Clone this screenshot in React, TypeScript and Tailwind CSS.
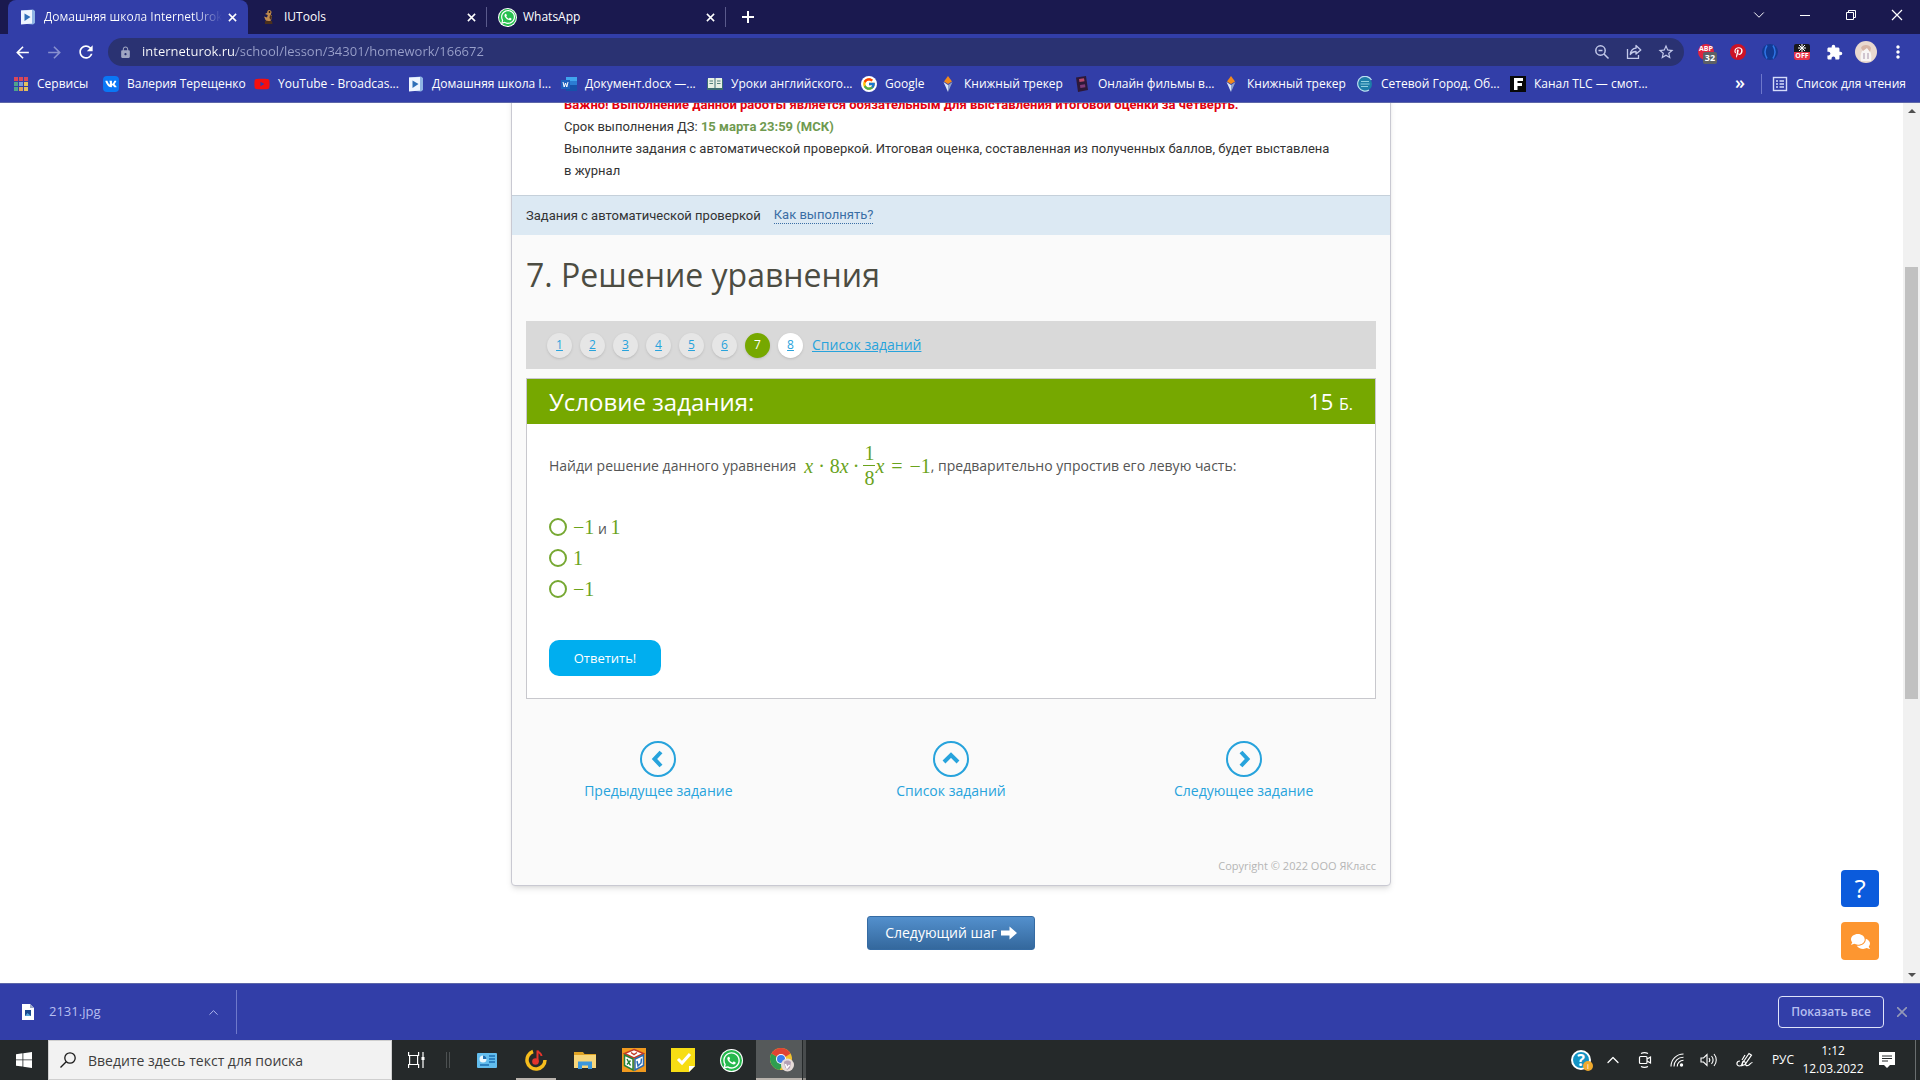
import { useState } from "react";
import type { ReactNode } from "react";
import { ChevronDown, ChevronUp } from "lucide-react";
import { FaComments, FaPinterestP, FaVk, FaWhatsapp, FaYoutube } from "react-icons/fa";
import { FcGoogle } from "react-icons/fc";
import { MdArrowBack, MdArrowForward, MdExtension, MdLock, MdMoreVert, MdRefresh, MdStarBorder } from "react-icons/md";

const ui = "font-['Open_Sans','Noto_Sans',sans-serif]";

/* ---------- small drawings ---------- */

const SchoolIcon = () => (
    <svg viewBox="0 0 16 16" className="h-4 w-4">
        <path d="M1 1.500 13 .5 15 2v12l-2 1.500-11-1Z" fill="#8fb4e4" />
        <path d="M1 1.500 12 1v13.500L1 15.500Z" fill="#eef5ff" />
        <path d="M4.500 4.500 10.500 8l-6 4Z" fill="#2f6fb8" />
    </svg>
);

const DuckIcon = () => (
    <svg viewBox="0 0 16 16" className="h-4 w-4">
        <path d="M9 1c1.500 0 2.500 1 2.500 2.200 0 1-.7 1.500-.7 2.800l1.200.5-1 5c-1.500 1-4 1-5.500-.5L4 7.500l3 1 .8-2.500L5 5l2.200-1.200C7.200 2 8 1 9 1Z" fill="#c08b4e" />
        <path d="M5 12h7l.5 3H5ZM10 6l2 1-1 4-1.500-2Z" fill="#4a2f1c" />
        <circle cx="9.500" cy="3" r=".9" fill="#2a180d" />
    </svg>
);

const WhatsAppIcon = () => (
    <span className="flex h-[17px] w-[17px] items-center justify-center rounded-full bg-[#27c04f] ring-1 ring-white">
        <FaWhatsapp className="h-4 w-4 text-white" />
    </span>
);

const AppsIcon = () => {
    const colors = ["#d9475a", "#d9475a", "#d9475a", "#4fa38c", "#7f9bd8", "#e3c15c", "#4fa38c", "#d9a15c", "#e3c15c"];

    return (
        <svg viewBox="0 0 16 16" className="h-4 w-4">
            {colors.map((color, i) => (
                <rect key={i} x={1 + (i % 3) * 5} y={1 + Math.floor(i / 3) * 5} width="4" height="4" fill={color} />
            ))}
        </svg>
    );
};

const VkIcon = () => (
    <span className="flex h-4 w-4 items-center justify-center rounded-[4px] bg-[#0a77f5] text-white">
        <FaVk className="h-3 w-3" />
    </span>
);

const WordIcon = () => (
    <svg viewBox="0 0 16 16" className="h-4 w-4">
        <path d="M5 1h11v4H5Z" fill="#41a5ee" />
        <path d="M5 5h11v4H5Z" fill="#2b7cd3" />
        <path d="M5 9h11v6H5Z" fill="#1651aa" />
        <rect y="4" width="9" height="9" fill="#1d5fbd" />
        <path d="m2 6 1.200 5L4.500 7l1.300 4L7 6" fill="none" stroke="#fff" strokeWidth="1" />
    </svg>
);

const BookIcon = () => (
    <svg viewBox="0 0 16 16" className="h-4 w-4">
        <path d="M0 3h16v11H0Z" fill="#3b6c72" />
        <path d="M1 2h6.500v10H1ZM8.500 2H15v10H8.500Z" fill="#e6f0e4" />
        <path d="M2.500 5H6M2.500 7.500H6M10 5h3.500M10 7.500h3.500" stroke="#4f7f7a" />
    </svg>
);

const TrackerIcon = () => (
    <svg viewBox="0 0 16 16" className="h-4 w-4">
        <path d="M8 0 12 5.500 8 8 4 5.500Z" fill="#f28a1c" />
        <path d="M3.500 6 8 9v7Z" fill="#dbe5f8" />
        <path d="M12.500 6 8 9v7Z" fill="#8fa2cc" />
    </svg>
);

const FilmIcon = () => (
    <svg viewBox="0 0 16 16" className="h-4 w-4">
        <path d="M2 1.500 12 0l2 14-10 2Z" fill="#2d1838" />
        <path d="m5 3 5-.7.500 3-5 .7Z" fill="#b8496c" />
        <path d="m6 9 5-.7.400 3-5 .7Z" fill="#7d3a78" />
    </svg>
);

const CityIcon = () => (
    <svg viewBox="0 0 16 16" className="h-4 w-4">
        <circle cx="8" cy="8" r="7" fill="#1d7ea8" />
        <path d="M14.500 4A7.400 7.400 0 1 0 12 14" fill="none" stroke="#b9e2f0" strokeWidth="1.200" />
        <path d="M4 5.500h8M3.500 8h9M4 10.500h7" stroke="#8fd0e0" />
    </svg>
);

const TlcIcon = () => (
    <svg viewBox="0 0 16 16" className="h-4 w-4">
        <rect width="16" height="16" fill="#080808" />
        <path d="M4 2h9v3H7.500v2H12v3H7.500v4H4Z" fill="#fff" />
    </svg>
);

const ReadingListIcon = () => (
    <svg viewBox="0 0 16 16" className="h-4 w-4" fill="none" stroke="#d5dcfa" strokeWidth="1.400">
        <rect x="1.500" y="1.500" width="13" height="13" />
        <path d="M4 5h2M7.500 5H12M4 8h2M7.500 8H12M4 11h2M7.500 11H12" />
    </svg>
);

const ZoomOutIcon = () => (
    <svg viewBox="0 0 16 16" className="h-4 w-4" fill="none" stroke="currentColor" strokeWidth="1.500">
        <circle cx="6.500" cy="6.500" r="4.700" />
        <path d="M4.500 6.500h4M10 10l4.500 4.500" />
    </svg>
);

const ShareIcon = () => (
    <svg viewBox="0 0 16 16" className="h-4 w-4" fill="none" stroke="currentColor" strokeWidth="1.300">
        <path d="M1.500 5v9.300h11V11" />
        <path d="M10 1.500 14.800 6 10 10V7.500C7 7.500 5.500 8.500 4.300 10.500 4.700 7 6.500 4.500 10 4.200Z" strokeLinejoin="round" />
    </svg>
);

const StepArrow = ({ d }: { d: string }) => (
    <svg viewBox="0 0 20 20" className="h-5 w-5" fill="none" stroke="currentColor" strokeWidth="4">
        <path d={d} />
    </svg>
);

const NextArrow = () => (
    <svg viewBox="0 0 16 14" className="h-[14px] w-4" fill="currentColor">
        <path d="M0 4.500h8.500V.5L16 7l-7.500 6.500v-4H0Z" />
    </svg>
);

const ChromeIcon = () => (
    <svg viewBox="0 0 24 24" className="h-6 w-6">
        <circle cx="11" cy="11" r="11" fill="#f2c230" />
        <path d="M11 11 1.500 5.500a11 11 0 0 0 8 16.400L14 15Z" fill="#2f9e4f" />
        <path d="M11 11 1.500 5.500A11 11 0 0 1 20.500 5.500L16 8.500Z" fill="#df4334" />
        <circle cx="11" cy="11" r="5" fill="#fff" />
        <circle cx="11" cy="11" r="4" fill="#3b7ded" />
        <circle cx="17.500" cy="17" r="6.500" fill="#e6dcd9" />
        <path d="M14 14c2-2 5-2 7 0l-1 6-3 2-2-3Z" fill="#b4a0b4" />
        <path d="m15.500 16 1.500 4 2.500-3" fill="none" stroke="#fff" strokeWidth="1.500" />
    </svg>
);

const CubeIcon = () => (
    <svg viewBox="0 0 24 24" className="h-6 w-6">
        <rect width="24" height="24" fill="#f19a1f" />
        <path d="m12 1.500 9.500 4L12 10 2.500 5.500Z" fill="#fff" stroke="#c23a27" strokeWidth="1.500" />
        <path d="M2.500 7 11 11v11l-8.500-4.500Z" fill="#fff" stroke="#24813b" strokeWidth="1.500" />
        <path d="M21.500 7 13 11v11l8.500-4.500Z" fill="#fff" stroke="#286bb5" strokeWidth="1.500" />
        <path d="m5 11 3.500 6.500M8.500 12.500 5 16.500" stroke="#24813b" strokeWidth="1.500" />
        <path d="m15 13 1 5 3-3 .500-4.500" fill="none" stroke="#286bb5" strokeWidth="1.500" />
        <path d="m9 4.500 3 2 3-2" fill="none" stroke="#c23a27" strokeWidth="1.500" />
    </svg>
);

/* ---------- browser ---------- */

const Tab = ({ icon, title, active, separated }: { icon: ReactNode; title: string; active?: boolean; separated?: boolean }) => (
    <div className={active ? "flex w-60 items-center rounded-t-lg bg-[#323ea8] pr-2 pl-3" : "flex w-[239px] items-center pr-2 pl-3"}>
        <span className="flex w-5 shrink-0 items-center justify-start">{icon}</span>
        <span className={active ? "ml-1 min-w-0 flex-1 overflow-hidden bg-[linear-gradient(to_right,#fff_150px,#323ea8_178px)] bg-clip-text text-xs whitespace-nowrap text-transparent" : "ml-1 flex-1 text-xs"}>{title}</span>
        <button aria-label="Закрыть вкладку" className="flex h-4 w-4 shrink-0 items-center justify-center">
            <svg viewBox="0 0 10 10" className="h-[9px] w-[9px]" stroke="#fff" strokeWidth="1.700"><path d="m1 1 8 8M9 1 1 9" /></svg>
        </button>
        {separated && <span className="-mr-2 ml-[7px] h-5 w-px bg-[#5a5a8c]" />}
    </div>
);

const TabStrip = () => (
    <header className="flex h-[34px] shrink-0 items-stretch bg-[#1a194f] pl-2 text-white">
        <Tab active icon={<SchoolIcon />} title="Домашняя школа InternetUrok.ru" />
        <Tab separated icon={<DuckIcon />} title="IUTools" />
        <Tab separated icon={<WhatsAppIcon />} title="WhatsApp" />
        <button aria-label="Новая вкладка" className="flex w-11 items-center justify-center">
            <svg viewBox="0 0 12 12" className="h-3 w-3" stroke="#fff" strokeWidth="2"><path d="M6 0v12M0 6h12" /></svg>
        </button>
        <div className="ml-auto flex pb-1">
            <button aria-label="Поиск вкладок" className="flex w-[46px] items-center justify-center"><ChevronDown size={18} strokeWidth={1.3} /></button>
            <button aria-label="Свернуть" className="flex w-[46px] items-center justify-center"><span className="h-px w-[10px] bg-white" /></button>
            <button aria-label="Развернуть" className="flex w-[46px] items-center justify-center">
                <svg viewBox="0 0 12 12" className="h-3 w-3" fill="none" stroke="#fff"><path d="M1.500 3.500h7v7h-7ZM3.500 3.500v-2h7v7h-2" /></svg>
            </button>
            <button aria-label="Закрыть" className="flex w-[46px] items-center justify-center">
                <svg viewBox="0 0 12 12" className="h-3 w-3" stroke="#fff" strokeWidth="1.200"><path d="m1 1 10 10M11 1 1 11" /></svg>
            </button>
        </div>
    </header>
);

const Extension = ({ label, children }: { label: string; children: ReactNode }) => (
    <button aria-label={label} className="flex h-8 w-8 items-center justify-center">{children}</button>
);

const AddressBar = () => (
    <div className="flex h-9 shrink-0 items-center bg-[#323ea8] pr-[6px] pl-[6px] text-white">
        <Extension label="Назад"><MdArrowBack size={19} /></Extension>
        <Extension label="Вперёд"><MdArrowForward size={19} className="text-[#8890cf]" /></Extension>
        <Extension label="Обновить"><MdRefresh size={20} /></Extension>
        <div className="ml-[6px] flex h-7 flex-1 items-center rounded-full bg-[#2a3272] pr-[2px] pl-[11px] text-[#c3c9ea]">
            <MdLock size={13} className="text-[#9fa5c2]" />
            <input
                aria-label="Адресная строка"
                defaultValue="interneturok.ru/school/lesson/34301/homework/166672"
                className="ml-[10px] min-w-0 flex-1 bg-[linear-gradient(to_right,#fff_94px,#9aa1cb_94px)] bg-clip-text text-[13px] text-transparent outline-none"
            />
            <Extension label="Масштаб"><ZoomOutIcon /></Extension>
            <Extension label="Поделиться"><ShareIcon /></Extension>
            <Extension label="В закладки"><MdStarBorder size={18} /></Extension>
        </div>
        <div className="ml-[6px] flex">
            <Extension label="AdBlock Plus">
                <span className="flex h-4 w-4 flex-col items-center rounded-full bg-[#e0243f] pt-px text-[7px] leading-[7px] font-bold">
                    ABP
                    <span className="ml-2 rounded-[2px] bg-[#5d6065] px-[2px] text-[9px] leading-3">32</span>
                </span>
            </Extension>
            <Extension label="Pinterest">
                <span className="flex h-4 w-4 items-center justify-center rounded-full bg-[#cc1225]"><FaPinterestP size={11} /></span>
            </Extension>
            <Extension label="VPN">
                <svg viewBox="0 0 16 16" className="h-4 w-4" fill="none" stroke="#2f74e4" strokeWidth="1.500"><circle cx="8" cy="8" r="8" fill="#123a94" stroke="none" /><path d="M5 1.500c-2.500 4-2.500 9 0 13M11 1.500c2.500 4 2.500 9 0 13" /></svg>
            </Extension>
            <Extension label="Выключатель">
                <span className="flex h-4 w-4 flex-col items-center justify-between overflow-hidden rounded-[2px] bg-[#18181c]">
                    <svg viewBox="0 0 12 8" className="h-2 w-3" stroke="#fff"><path d="M6 0v8M2 4h8M3 1l6 6M9 1 3 7" /></svg>
                    <span className="w-4 bg-[#e5344b] text-center text-[7px] leading-[8px] font-bold">OFF</span>
                </span>
            </Extension>
            <Extension label="Расширения"><MdExtension size={17} /></Extension>
            <Extension label="Профиль">
                <svg viewBox="0 0 22 22" className="h-[22px] w-[22px]"><circle cx="11" cy="11" r="11" fill="#e9d9cf" /><path d="M6 20c-1-5 0-9 2-11l3-4 3 4c2 2 3 6 2 11Z" fill="#f8f5f4" /><path d="M6 7c1-4 9-4 10 0l-1 4-3-4-4 3Z" fill="#d6b5a6" /><path d="M9 12v6M13 12v6" stroke="#a996ac" /></svg>
            </Extension>
            <Extension label="Меню"><MdMoreVert size={20} /></Extension>
        </div>
    </div>
);

const bookmarks = [
    { title: "Сервисы", width: "w-[90px]", icon: <AppsIcon /> },
    { title: "Валерия Терещенко", width: "w-[151px]", icon: <VkIcon /> },
    { title: "YouTube - Broadcas...", width: "w-[154px]", icon: <FaYoutube size={16} className="text-[#f40f0f]" /> },
    { title: "Домашняя школа I...", width: "w-[153px]", icon: <SchoolIcon /> },
    { title: "Документ.docx —...", width: "w-[146px]", icon: <WordIcon /> },
    { title: "Уроки английского...", width: "w-[154px]", icon: <BookIcon /> },
    { title: "Google", width: "w-[79px]", icon: <span className="rounded-full bg-white p-px"><FcGoogle size={14} /></span> },
    { title: "Книжный трекер", width: "w-[134px]", icon: <TrackerIcon /> },
    { title: "Онлайн фильмы в...", width: "w-[149px]", icon: <FilmIcon /> },
    { title: "Книжный трекер", width: "w-[134px]", icon: <TrackerIcon /> },
    { title: "Сетевой Город. Об...", width: "w-[153px]", icon: <CityIcon /> },
    { title: "Канал TLC — смот...", width: "w-[153px]", icon: <TlcIcon /> },
];

const BookmarksBar = () => (
    <nav aria-label="Закладки" className="flex h-[33px] shrink-0 items-center border-b border-[#5c66a8] bg-[#323ea8] pr-[14px] pb-1 pl-[13px] text-xs text-white">
        {bookmarks.map((bookmark, i) => (
            <a key={i} href="#" className={`flex shrink-0 items-center gap-2 whitespace-nowrap ${bookmark.width}`}>
                <span className="flex w-4 shrink-0 justify-center">{bookmark.icon}</span>
                {bookmark.title}
            </a>
        ))}
        <button aria-label="Другие закладки" className="ml-auto pb-1 text-lg leading-5 font-semibold">»</button>
        <span className="ml-4 h-5 w-px bg-[#6d77cb]" />
        <a href="#" className="ml-[10px] flex items-center gap-2 whitespace-nowrap"><ReadingListIcon />Список для чтения</a>
    </nav>
);

/* ---------- lesson page ---------- */

const Num = ({ children }: { children: ReactNode }) => (
    <span className="font-['Liberation_Serif',serif] text-xl leading-6 text-[#6aa31c]">{children}</span>
);

const Formula = () => (
    <span className="ml-2 inline-flex items-center font-['Liberation_Serif',serif] text-xl leading-6 text-[#6aa31c]">
        <i>x</i>
        <span className="mx-[5px]">·</span>
        8<i>x</i>
        <span className="mx-1">·</span>
        <span className="flex flex-col items-center">
            <span className="border-b border-[#6aa31c] px-px">1</span>
            <span>8</span>
        </span>
        <i>x</i>
        <span className="mx-[7px]">=</span>
        −1
    </span>
);

const Answers = () => {
    const [selected, setSelected] = useState<number | null>(null);
    const answers = [<><Num>−1</Num> и <Num>1</Num></>, <Num>1</Num>, <Num>−1</Num>];

    return (
        <div role="radiogroup" aria-label="Варианты ответа" className="mt-[21px] flex flex-col">
            {answers.map((answer, i) => (
                <label key={i} className="flex h-[31px] items-center gap-[6px]">
                    <input
                        type="radio"
                        name="answer"
                        checked={selected === i}
                        onChange={() => setSelected(i)}
                        className="h-[18px] w-[18px] appearance-none rounded-full border-2 border-[#76a832] bg-white checked:bg-[#76a832]"
                    />
                    <span>{answer}</span>
                </label>
            ))}
        </div>
    );
};

const StepLink = ({ icon, title }: { icon: ReactNode; title: string }) => (
    <a href="#" className="flex flex-col items-center gap-1 text-sm text-[#27a3dc]">
        <span className="flex h-9 w-9 items-center justify-center rounded-full border-2 border-[#27a3dc]">{icon}</span>
        {title}
    </a>
);

const TaskPager = () => (
    <nav aria-label="Задания" className="mt-6 flex h-12 items-center gap-2 bg-[#d9d9d9] pl-[21px] text-xs">
        {[1, 2, 3, 4, 5, 6].map((n) => (
            <a key={n} href="#" className="flex h-[25px] w-[25px] items-center justify-center rounded-full bg-[#e6e6e6] text-[#27a3dc] underline shadow-sm">{n}</a>
        ))}
        <span className="flex h-[25px] w-[25px] items-center justify-center rounded-full bg-[#76a800] text-white shadow-sm">7</span>
        <a href="#" className="flex h-[25px] w-[25px] items-center justify-center rounded-full bg-white text-[#27a3dc] underline shadow-sm">8</a>
        <a href="#" className="ml-px text-sm text-[#27a3dc] underline">Список заданий</a>
    </nav>
);

const LessonCard = () => (
    <article className="-mt-[10px] w-[880px] rounded-b-[4px] border border-[#c9c9d2] bg-[#fafafa] shadow-md">
        <div className="bg-white pr-14 pb-[13px] pl-[52px] font-['Roboto',sans-serif] text-[13px] leading-[22px] text-[#333]">
            <p className="font-bold text-[#e0000f]">Важно! Выполнение данной работы является обязательным для выставления итоговой оценки за четверть.</p>
            <p>Срок выполнения ДЗ: <b className="text-[#6f9a50]">15 марта 23:59 (МСК)</b></p>
            <p>Выполните задания с автоматической проверкой. Итоговая оценка, составленная из полученных баллов, будет выставлена в&nbsp;журнал</p>
        </div>
        <div className="flex h-10 items-center gap-[13px] border-t border-[#c5d0da] bg-[#dce9f3] px-[14px] font-['Roboto',sans-serif] text-[13px] text-[#333]">
            Задания с автоматической проверкой
            <a href="#" className="border-b border-dotted border-[#3a6ea5] leading-4 text-[#3a6ea5]">Как выполнять?</a>
        </div>
        <div className="px-[14px] pt-[18px] pb-[11px]">
            <h1 className="text-[32px] leading-[44px] text-[#4c4c42]">7. Решение уравнения</h1>
            <TaskPager />
            <section className="mt-[9px] border border-[#c8c8cd] bg-white">
                <header className="flex h-[45px] items-center justify-between bg-[#76a800] px-[22px] text-white">
                    <h2 className="text-2xl">Условие задания:</h2>
                    <span className="text-[22px]">15 <span className="text-base">Б.</span></span>
                </header>
                <form className="px-[22px] pt-[17px] pb-[22px] text-sm text-[#555]" onSubmit={(e) => e.preventDefault()}>
                    <p className="flex items-center whitespace-nowrap">Найди решение данного уравнения<Formula />, предварительно упростив его левую часть:</p>
                    <Answers />
                    <button className="mt-9 h-9 w-28 rounded-[10px] bg-[#00aeef] text-[13px] text-white">Ответить!</button>
                </form>
            </section>
            <nav aria-label="Навигация по заданиям" className="-mx-[14px] mt-[42px] grid grid-cols-3">
                <StepLink icon={<StepArrow d="M13 3 6.500 10l6.500 7" />} title="Предыдущее задание" />
                <StepLink icon={<StepArrow d="m3 13 7-7 7 7" />} title="Список заданий" />
                <StepLink icon={<StepArrow d="m7 3 6.500 7L7 17" />} title="Следующее задание" />
            </nav>
            <p className="mt-[57px] text-right text-[11px] leading-4 text-[#b5b5b5]">Copyright © 2022 ООО ЯКласс</p>
        </div>
    </article>
);

const Scrollbar = () => (
    <div aria-hidden="true" className="flex w-[17px] shrink-0 flex-col items-center bg-[#f1f1f1] py-[6px]">
        <span className="border-x-4 border-b-4 border-x-transparent border-b-[#505050]" />
        <span className="mt-[154px] h-[432px] w-[13px] bg-[#c1c1c1]" />
        <span className="mt-auto border-x-4 border-t-4 border-x-transparent border-t-[#505050]" />
    </div>
);

const LessonPage = () => (
    <div className="flex min-h-0 flex-1 overflow-hidden bg-white">
        <main className="relative flex min-w-0 flex-1 flex-col items-center overflow-hidden pr-px">
            <LessonCard />
            <button className="mt-[30px] flex h-[34px] shrink-0 items-center gap-1 rounded-[3px] border border-[#356ba3] bg-linear-to-b from-[#5390cd] to-[#34689d] px-[17px] text-sm text-white">
                Следующий шаг <NextArrow />
            </button>
            <div className="absolute right-6 bottom-[23px] flex flex-col gap-[15px]">
                <button aria-label="Помощь" className="flex h-[37px] w-[38px] items-center justify-center rounded-[4px] bg-[#0b5bdc] text-[26px] text-white">?</button>
                <button aria-label="Чат" className="flex h-[38px] w-[38px] items-center justify-center rounded-[4px] bg-[#fd9630] text-white"><FaComments size={19} /></button>
            </div>
        </main>
        <Scrollbar />
    </div>
);

const DownloadBar = () => (
    <footer className="flex h-[57px] shrink-0 items-center border-t border-[#5c66a8] bg-[#323ea8] pr-[13px] pl-[22px] text-[#b7bff0]">
        <svg viewBox="0 0 12 16" className="h-4 w-3"><path d="M0 0h8l4 4v12H0Z" fill="#fff" /><path d="M8 0v4h4Z" fill="#9aa8c8" /><path d="M3 6h6v6H3Z" fill="#1c4b8e" /><path d="m3 12 2.500-3L9 12Z" fill="#57a6d8" /></svg>
        <span className="ml-[15px] w-[156px] text-[13px]">2131.jpg</span>
        <button aria-label="Открыть меню" className="flex w-4 justify-center"><ChevronUp size={15} strokeWidth={1.5} /></button>
        <span className="ml-[15px] h-11 w-px bg-[#6f79cb]" />
        <button className="ml-auto h-8 w-[106px] rounded-[4px] border border-[#dfe3fa] text-xs font-semibold">Показать все</button>
        <button aria-label="Закрыть панель" className="ml-[13px]">
            <svg viewBox="0 0 10 10" className="h-[10px] w-[10px]" stroke="#9499b8" strokeWidth="1.600"><path d="m0 0 10 10M10 0 0 10" /></svg>
        </button>
    </footer>
);

/* ---------- desktop ---------- */

const TaskbarApp = ({ label, children, open }: { label: string; children: ReactNode; open?: boolean }) => (
    <button aria-label={label} className="relative flex w-[49px] items-center justify-center">
        {children}
        {open && <span className="absolute bottom-0 h-[2px] w-10 bg-[#b9b3ad]" />}
    </button>
);

const Taskbar = () => (
    <footer className="flex h-10 shrink-0 items-stretch bg-[#25292a] text-white">
        <button aria-label="Пуск" className="flex w-12 items-center justify-center">
            <svg viewBox="0 0 16 16" className="h-4 w-4" fill="#fff"><path d="M0 2.200 6.500 1.300v6.200H0ZM7.300 1.200 16 0v7.500H7.300ZM0 8.300h6.500v6.300L0 13.700ZM7.300 8.300H16V16l-8.700-1.300Z" /></svg>
        </button>
        <label className="flex w-[344px] items-center gap-3 border border-[#cfcfcf] bg-[#f2f2f2] pl-[11px]">
            <svg viewBox="0 0 16 16" className="h-4 w-4" fill="none" stroke="#1b1b1b" strokeWidth="1.300"><circle cx="10" cy="6" r="5.200" /><path d="M6.200 9.800.500 15.500" /></svg>
            <input type="text" aria-label="Поиск" placeholder="Введите здесь текст для поиска" className="min-w-0 flex-1 bg-transparent text-[14px] text-[#333] outline-none placeholder:text-[#3d3d3d]" />
        </label>
        <button aria-label="Представление задач" className="flex w-12 items-center justify-center">
            <svg viewBox="0 0 17 16" className="h-4 w-[17px]" fill="none" stroke="#fff" strokeWidth="1.200"><path d="M.6 0v3.500h10V0M.6 16v-3.500h10V16M1.600 3.500v9M9.600 3.500v9M15 0v16" /><path d="M13.500 5h3v3h-3Z" fill="#fff" stroke="none" /></svg>
        </button>
        <span className="my-3 mr-3 ml-[6px] w-1 border-x border-[#4d5152]" />
        <TaskbarApp label="Панель управления">
            <svg viewBox="0 0 20 15" className="h-[15px] w-5"><rect width="20" height="15" rx="1" fill="#62bdee" /><circle cx="6" cy="6" r="3.500" fill="#eaf7fd" /><path d="M6 6V2.500A3.500 3.500 0 0 1 9.500 6Z" fill="#1d6fb3" /><path d="M12 3h6M12 6h6M12 9h6M3 12h9" stroke="#1d6fb3" strokeWidth="1.300" /></svg>
        </TaskbarApp>
        <TaskbarApp label="Музыка" open>
            <svg viewBox="0 0 22 22" className="h-[22px] w-[22px]" fill="none"><path d="M8 2.500A9 9 0 1 0 20 11" stroke="#f6bd1d" strokeWidth="3.500" /><path d="M12.500 13V1.500c1 2.500 4 2.500 4 5.500" stroke="#e4342c" strokeWidth="2" /><circle cx="10.500" cy="12.500" r="3.300" fill="#e4342c" /></svg>
        </TaskbarApp>
        <TaskbarApp label="Проводник">
            <svg viewBox="0 0 22 18" className="h-[18px] w-[22px]"><path d="M0 1h9l1.500 2H22v14H0Z" fill="#dfa325" /><path d="M0 4h22v13H0Z" fill="#f7d67b" /><path d="M4 18v-7.500h14V18h-4v-3.500H8V18Z" fill="#3b97dd" /></svg>
        </TaskbarApp>
        <TaskbarApp label="Кубики"><CubeIcon /></TaskbarApp>
        <TaskbarApp label="Заметки">
            <svg viewBox="0 0 24 24" className="h-6 w-6"><path d="M0 0h24v18l-6 6H0Z" fill="#f7dd14" /><path d="M24 18h-6v6Z" fill="#fff" /><path d="m7 11 4 4 8-9" fill="none" stroke="#fff" strokeWidth="3" /></svg>
        </TaskbarApp>
        <TaskbarApp label="WhatsApp">
            <span className="flex h-[21px] w-[21px] items-center justify-center rounded-full bg-[#25b84c] ring-1 ring-white"><FaWhatsapp size={19} /></span>
        </TaskbarApp>
        <button aria-label="Google Chrome" className="flex w-[46px] items-center justify-center border-b-2 border-[#b9b3ad] bg-[#55595a] pt-[2px] pl-[6px]"><ChromeIcon /></button>
        <span className="ml-px w-[3px] border-b-2 border-[#8e8b87] bg-[#484c4d]" />

        <div className="ml-auto flex items-center text-xs">
            <button aria-label="Справка" className="relative flex w-8 justify-center">
                <span className="flex h-5 w-5 items-center justify-center rounded-full border-2 border-white bg-[#1493c4] text-base leading-4 font-bold">?</span>
                <span className="absolute right-1 -bottom-px h-[10px] w-[10px] rounded-full bg-[#efa92d] text-[8px] leading-[10px]">i</span>
            </button>
            <button aria-label="Скрытые значки" className="flex w-8 justify-center"><ChevronUp size={20} strokeWidth={1.5} /></button>
            <button aria-label="Собрание" className="flex w-8 justify-center">
                <svg viewBox="0 0 14 16" className="h-4 w-[14px]" fill="none" stroke="#fff" strokeWidth="1.200"><rect x="1.500" y="4.500" width="7.500" height="7" rx="1" /><path d="m9 7 3.500-2v6L9 9M3 1.500c2-1 5-1 7 0M3 14.500c2 1 5 1 7 0" /></svg>
            </button>
            <button aria-label="Сеть" className="flex w-8 justify-center">
                <svg viewBox="0 0 14 14" className="h-[14px] w-[14px]" fill="none" stroke="#fff" strokeWidth="1.100"><path d="M1 13.500C1 6.500 6.500 1 13.500 1M4 13.500C4 8 8 4.200 13.500 4.200M7.200 13.500c0-3.500 2.800-6.200 6.300-6.200" /><circle cx="11.500" cy="12" r="1.700" fill="#fff" stroke="none" /></svg>
            </button>
            <button aria-label="Громкость" className="flex w-8 justify-center">
                <svg viewBox="0 0 18 14" className="h-[14px] w-[18px]" fill="none" stroke="#fff" strokeWidth="1.100"><path d="M1 5v4h2.500L7 12.500v-11L3.500 5ZM9 5c1 1.200 1 2.800 0 4M11.500 3c2 2.500 2 5.500 0 8M14 1c3 3.500 3 8.500 0 12" /></svg>
            </button>
            <button aria-label="Перо" className="flex w-10 justify-center">
                <svg viewBox="0 0 18 16" className="h-4 w-[18px]" fill="none" stroke="#fff" strokeWidth="1.200"><path d="M4 9c-4 0-4 5-.5 5C8 14 5 9 8 9.500s0 5 4 4c2-.5 2.500-3 4.500-3" /><path d="M6.500 11 13 1.500l2.500 1.700L9 12.500l-3 1ZM9 3l-3 5" /></svg>
            </button>
            <button className="w-9 text-center">РУС</button>
            <button className="flex w-16 flex-col items-center leading-[18px] whitespace-nowrap"><span>1:12</span><span>12.03.2022</span></button>
            <button aria-label="Уведомления" className="flex w-11 justify-center">
                <svg viewBox="0 0 16 16" className="h-4 w-4"><path d="M0 0h16v13H11l-3 3-3-3H0Z" fill="#fff" /><path d="M3 4h10M3 6.500h10M3 9h6" stroke="#25292a" /></svg>
            </button>
            <span className="ml-[6px] h-10 w-[5px] border-l border-[#6a6e6f]" />
        </div>
    </footer>
);

const App = () => (
    <div className={`flex h-screen flex-col overflow-hidden ${ui}`}>
        <TabStrip />
        <AddressBar />
        <BookmarksBar />
        <LessonPage />
        <DownloadBar />
        <Taskbar />
    </div>
);

export default App;
